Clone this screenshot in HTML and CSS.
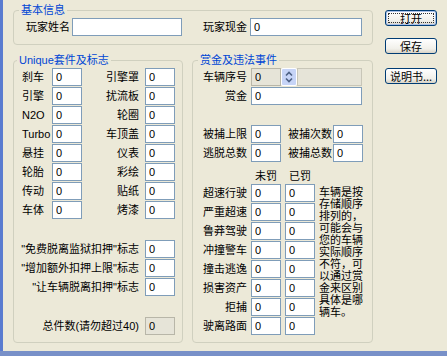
FILE: index.html
```html
<html lang="zh-CN">

<head>
    <title>玩家存档编辑器</title>
    <link rel="stylesheet" href="styles.css">
</head>

<body>
    <div class="window">
        <div class="main">
            <fieldset class="group basic">
                <legend>基本信息</legend>
                <div class="basic-row">
                    <label class="basic-label" for="pname">玩家姓名</label>
                    <input type="text" id="pname" class="field name" value="">
                    <label class="basic-label cash-label" for="cash">玩家现金</label>
                    <input type="text" id="cash" class="field cash" value="0">
                </div>
            </fieldset>
            <div class="lower">
                <fieldset class="group unique">
                    <legend>Unique套件及标志</legend>
                    <div class="parts">
                        <span class="part-l">刹车</span><input type="text" class="field" value="0">
                        <span class="part-r">引擎罩</span><input type="text" class="field" value="0">
                        <span class="part-l">引擎</span><input type="text" class="field" value="0">
                        <span class="part-r">扰流板</span><input type="text" class="field" value="0">
                        <span class="part-l latin">N2O</span><input type="text" class="field" value="0">
                        <span class="part-r">轮圈</span><input type="text" class="field" value="0">
                        <span class="part-l latin">Turbo</span><input type="text" class="field" value="0">
                        <span class="part-r">车顶盖</span><input type="text" class="field" value="0">
                        <span class="part-l">悬挂</span><input type="text" class="field" value="0">
                        <span class="part-r">仪表</span><input type="text" class="field" value="0">
                        <span class="part-l">轮胎</span><input type="text" class="field" value="0">
                        <span class="part-r">彩绘</span><input type="text" class="field" value="0">
                        <span class="part-l">传动</span><input type="text" class="field" value="0">
                        <span class="part-r">贴纸</span><input type="text" class="field" value="0">
                        <span class="part-l">车体</span><input type="text" class="field" value="0">
                        <span class="part-r">烤漆</span><input type="text" class="field" value="0">
                    </div>
                    <div class="flags">
                        <span class="flag-l">"免费脱离监狱扣押"标志</span><input type="text" class="field" value="0">
                        <span class="flag-l">"增加额外扣押上限"标志</span><input type="text" class="field" value="0">
                        <span class="flag-l">"让车辆脱离扣押"标志</span><input type="text" class="field" value="0">
                    </div>
                    <div class="flags total">
                        <span class="flag-l">总件数(请勿超过40)</span><input type="text" class="field off" value="0" disabled>
                    </div>
                </fieldset>

                <fieldset class="group bounty">
                    <legend>赏金及违法事件</legend>
                    <div class="row first">
                        <span class="row-l">车辆序号</span>
                        <div class="spin">
                            <input type="text" class="field off spin-value" value="0" disabled>
                            <span class="spin-btn">
                                <svg width="16" height="18" viewBox="0 0 16 18">
                                    <rect x="0.5" y="0.5" width="15" height="17" rx="1.5" fill="#c6d4f7" stroke="#ffffff"/>
                                    <path d="M5 7.5 L8 4.5 L11 7.5" fill="none" stroke="#4d6185" stroke-width="1.6"/>
                                    <path d="M5 10.5 L8 13.5 L11 10.5" fill="none" stroke="#4d6185" stroke-width="1.6"/>
                                </svg>
                            </span>
                            <span class="spin-rest"></span>
                        </div>
                    </div>
                    <div class="row">
                        <span class="row-l">赏金</span>
                        <input type="text" class="field bounty-val" value="0">
                    </div>
                    <div class="row gap">
                        <span class="row-l">被捕上限</span>
                        <input type="text" class="field" value="0">
                        <span class="pair-l">被捕次数</span>
                        <input type="text" class="field" value="0">
                    </div>
                    <div class="row">
                        <span class="row-l">逃脱总数</span>
                        <input type="text" class="field" value="0">
                        <span class="pair-l">被捕总数</span>
                        <input type="text" class="field" value="0">
                    </div>
                    <div class="heads">
                        <span></span><span>未罚</span><span>已罚</span>
                    </div>
                    <div class="crimes">
                        <span class="crime-l">超速行驶</span><input type="text" class="field" value="0"><input type="text" class="field" value="0">
                        <p class="note">车辆是按<br>存储顺序<br>排列的，<br>可能会与<br>您的车辆<br>实际顺序<br>不符，可<br>以通过赏<br>金来区别<br>具体是哪<br>辆车。</p>
                        <span class="crime-l">严重超速</span><input type="text" class="field" value="0"><input type="text" class="field" value="0">
                        <span class="crime-l">鲁莽驾驶</span><input type="text" class="field" value="0"><input type="text" class="field" value="0">
                        <span class="crime-l">冲撞警车</span><input type="text" class="field" value="0"><input type="text" class="field" value="0">
                        <span class="crime-l">撞击逃逸</span><input type="text" class="field" value="0"><input type="text" class="field" value="0">
                        <span class="crime-l">损害资产</span><input type="text" class="field" value="0"><input type="text" class="field" value="0">
                        <span class="crime-l">拒捕</span><input type="text" class="field" value="0"><input type="text" class="field" value="0">
                        <span class="crime-l">驶离路面</span><input type="text" class="field" value="0"><input type="text" class="field" value="0">
                    </div>
                </fieldset>
            </div>
        </div>

        <div class="buttons">
            <button type="button" class="btn default">打开</button>
            <button type="button" class="btn">保存</button>
            <button type="button" class="btn">说明书...</button>
        </div>
    </div>
</body>

</html>
```

FILE: styles.css
```css
html, body {
    margin: 0;
    padding: 0;
}

body {
    background: #7890c8;
    font-family: "Liberation Sans", "Noto Sans CJK SC", sans-serif;
    font-size: 11px;
    color: #000;
}

.window {
    display: flex;
    height: 351px;
    border-left: 3px solid #5a7cd0;
    background: #ece9d8;
}

.main {
    width: 360px;
    padding-left: 10px;
    padding-top: 3px;
}

/* group boxes */
.group {
    margin: 0;
    padding: 0;
    min-width: 0;
    border: 1px solid #d0d0bf;
    border-radius: 4px;
}

.group legend {
    margin-left: 5px;
    padding: 0 2px;
    line-height: 14px;
    font-size: 11px;
    color: #0046d5;
}

.unique legend {
    margin-left: 3px;
}

.field {
    box-sizing: border-box;
    width: 30px;
    height: 18px;
    margin: 0;
    padding: 0 0 0 3px;
    border: 1px solid #7f9db9;
    background: #fff;
    font-family: "Liberation Sans", sans-serif;
    font-size: 11px;
    color: #000;
    outline: none;
}

.field.off {
    background: #e6e4d8;
    border-color: #b8b6a8;
    color: #000;
}

/* basic info */
.basic-row {
    display: flex;
    align-items: center;
    padding: 1px 0 8px 12px;
}

.basic-label {
    width: 46px;
    line-height: 18px;
}

.name {
    width: 110px;
}

.cash-label {
    width: 68px;
    text-align: right;
    padding-right: 3px;
    box-sizing: border-box;
}

.cash {
    width: 112px;
}

.lower {
    display: flex;
    gap: 9px;
    margin-top: 8px;
}

/* unique parts */
.unique {
    width: 170px;
    box-sizing: border-box;
    padding-bottom: 7px;
}

.parts {
    display: grid;
    grid-template-columns: 38px 30px 63px 30px;
    row-gap: 1px;
    padding-top: 1px;
}

.part-l {
    padding-left: 8px;
    line-height: 18px;
}

.part-r {
    text-align: right;
    padding-right: 6px;
    line-height: 18px;
}

.flags {
    display: grid;
    grid-template-columns: 131px 30px;
    row-gap: 1px;
    margin-top: 21px;
}

.flag-l {
    text-align: right;
    padding-right: 6px;
    line-height: 18px;
    white-space: nowrap;
}

/* bounty */
.bounty {
    width: 181px;
    box-sizing: border-box;
    padding-bottom: 7px;
}

.row {
    display: flex;
    margin-top: 1px;
}

.row.first {
    margin-top: 0;
    padding-top: 1px;
}

.row.gap {
    margin-top: 20px;
}

.row-l {
    width: 58px;
    box-sizing: border-box;
    padding-right: 4px;
    text-align: right;
    line-height: 18px;
}

.pair-l {
    width: 52px;
    box-sizing: border-box;
    padding-right: 1px;
    text-align: right;
    line-height: 18px;
}

.spin {
    display: flex;
    width: 111px;
    height: 18px;
}

.spin-btn {
    display: block;
    width: 16px;
    height: 18px;
}

.spin-btn svg {
    display: block;
}

.spin-rest {
    flex: 1;
    box-sizing: border-box;
    border: 1px solid #c8c6b8;
    background: #e6e4d8;
}

.bounty-val {
    width: 111px;
}

.heads {
    display: grid;
    grid-template-columns: 54px 30px 30px;
    column-gap: 4px;
    margin-top: 6px;
    height: 16px;
    line-height: 16px;
}

.heads span {
    text-align: center;
}

.crimes {
    display: grid;
    grid-template-columns: 54px 30px 30px 48px;
    column-gap: 4px;
    row-gap: 1px;
}

.crime-l {
    text-align: right;
    line-height: 18px;
    white-space: nowrap;
}

.note {
    grid-column: 4;
    grid-row: 1 / span 8;
    margin: 0;
    padding-top: 1px;
    font-family: "Noto Sans CJK SC", sans-serif;
    font-size: 11px;
    line-height: 12px;
    white-space: nowrap;
}

/* buttons */
.buttons {
    display: flex;
    flex-direction: column;
    margin-left: 12px;
    padding-top: 10px;
}

.btn {
    box-sizing: border-box;
    width: 52px;
    height: 16px;
    margin: 0 0 12px 0;
    padding: 0;
    border: 1px solid #003c74;
    border-radius: 3px;
    background: linear-gradient(#ffffff, #f1f0ea 70%, #d8d3c6);
    font-family: "Noto Sans CJK SC", sans-serif;
    font-size: 11px;
    line-height: 14px;
    color: #000;
}

.btn + .btn + .btn {
    margin-top: 2px;
}

.btn.default {
    box-shadow: inset 0 0 0 1px #a9c0ea;
    outline: 1px dotted #333;
    outline-offset: -4px;
}
```
